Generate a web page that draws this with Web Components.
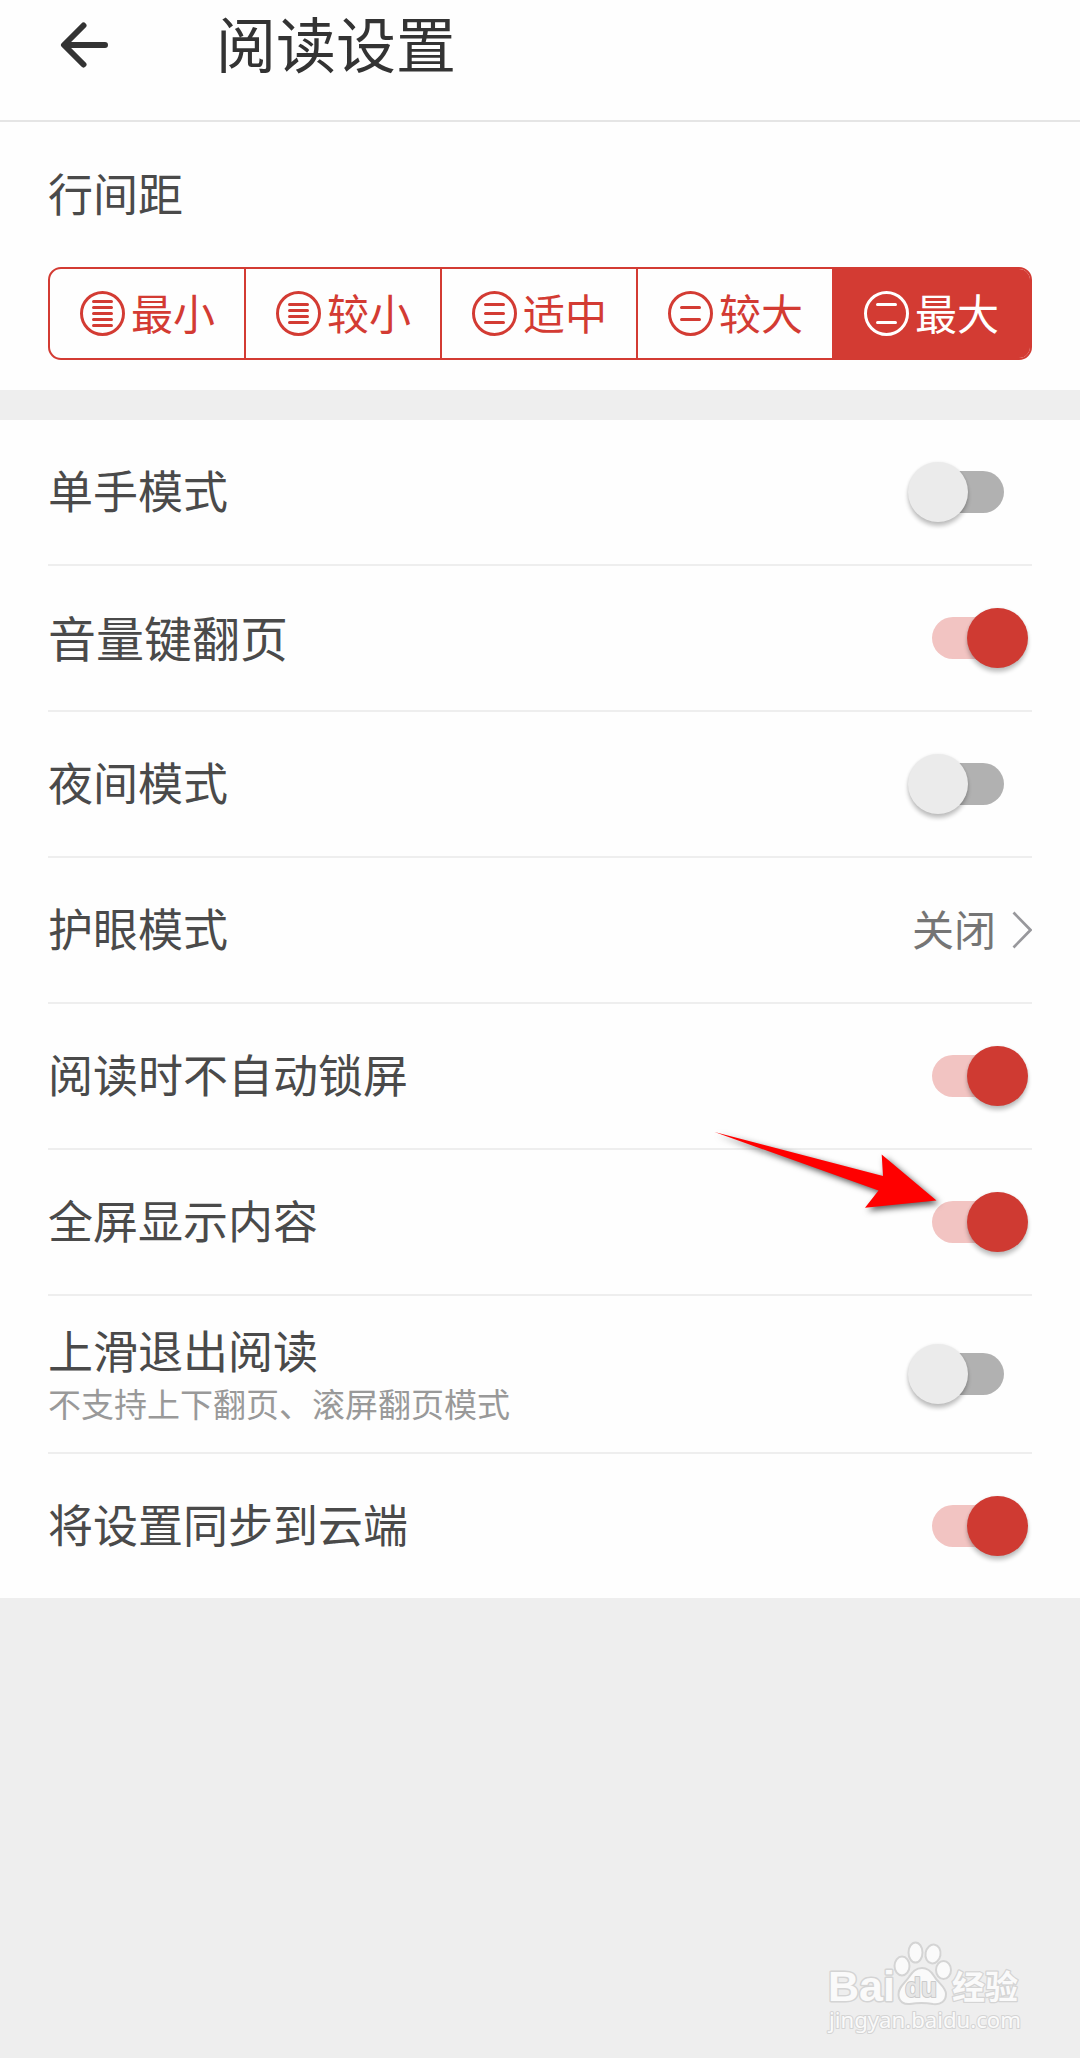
<!DOCTYPE html>
<html lang="zh-CN">
<head>
<meta charset="utf-8">
<title>阅读设置</title>
<style>
html, body { margin: 0; padding: 0; }
body { background: #eee; font-family: "Noto Sans CJK SC", sans-serif; color: #4a4a4a; }
</style>
</head>
<body>
<reader-settings></reader-settings>
<script>
const define = (name, html, setup) => {
  const tpl = document.createElement('template');
  tpl.innerHTML = html;
  customElements.define(name, class extends HTMLElement {
    constructor() {
      super();
      this.attachShadow({ mode: 'open' }).append(tpl.content.cloneNode(true));
    }
    connectedCallback() { if (setup) setup(this, this.shadowRoot); }
  });
};

define('page-header', `
<style>
:host { display: flex; align-items: center; box-sizing: border-box; height: 122px; padding: 0 0 32px 60px; border-bottom: 2px solid #e5e5e5; background: #fefefe; color: #333; }
svg { display: block; width: 50px; height: 50px; margin-right: 106px; margin-top: 2px; }
h1 { margin: 0; padding-bottom: 4px; font-size: 60px; line-height: 84px; font-weight: 400; }
</style>
<svg viewBox="0 0 50 50" fill="none" stroke="#333" stroke-width="6" stroke-linecap="round" stroke-linejoin="round"><path d="M23.5 5.5 4 25l19.500 19.500M5 25H45"/></svg>
<h1><slot></slot></h1>`);

define('spacing-icon', `
<style>:host { display: block; width: 45px; height: 45px; } svg { display: block; }</style>
<svg width="45" height="45" viewBox="0 0 45 45" fill="none" stroke="currentColor" stroke-width="3" stroke-linecap="round"><circle cx="22.5" cy="22.5" r="21"/><path/></svg>`,
(host, root) => {
  const ys = (host.getAttribute('lines') || '').split(' ').filter(Boolean);
  root.querySelector('path').setAttribute('d', ys.map(y => `M13.500 ${y}H31.500`).join(''));
});

define('segment-option', `
<style>
:host { display: flex; flex: none; align-items: center; box-sizing: border-box; width: 196px; height: 89px; padding-left: 30px; gap: 6px; border-right: 2px solid #d33b33; color: #d33b33; font-size: 42px; line-height: 60px; }
:host([selected]) { border-right: 0; background: #d33b33; color: #fff; }
:host([selected]) { margin-left: -2px; padding-left: 32px; width: 198px; }
span { padding-bottom: 4px; }
</style>
<span><slot></slot></span>`,
(host, root) => {
  const icon = document.createElement('spacing-icon');
  icon.setAttribute('lines', host.getAttribute('lines'));
  root.querySelector('span').before(icon);
});

define('segment-group', `
<style>:host { display: flex; box-sizing: border-box; height: 93px; border: 2px solid #d33b33; border-radius: 13px; overflow: hidden; }</style>
<slot></slot>`);

define('spacing-section', `
<style>
:host { display: flex; flex-direction: column; box-sizing: border-box; height: 268px; padding: 38px 48px 30px; background: #fefefe; }
h2 { margin: 0 0 41px; font-size: 45px; font-weight: 400; line-height: 66px; }
</style>
<h2><slot name="title"></slot></h2><slot></slot>`);

define('toggle-switch', `
<style>
:host { display: flex; align-items: center; position: relative; width: 120px; height: 60px; margin-right: 4px; }
.track { width: 92px; height: 42px; margin-left: 4px; border-radius: 21px; background: #b1b1b1; }
.thumb { position: absolute; left: 0; top: -.500px; width: 60px; height: 60px; border-radius: 50%; background: #ebebeb; box-shadow: 0 4px 4px rgba(0,0,0,.24), 0 0 3px rgba(0,0,0,.08); }
:host([on]) .track { margin-left: 24px; background: #f2c4c2; }
:host([on]) .thumb { left: 59px; width: 60.500px; background: #cf3a32; }
</style>
<div class="track"></div><div class="thumb"></div>`);

define('link-value', `
<style>
:host { display: flex; align-items: center; gap: 16px; font-size: 42px; line-height: 60px; color: #757575; }
span { padding-bottom: 4px; }
svg { display: block; }
</style>
<span><slot></slot></span><svg width="20" height="38" viewBox="0 0 20 38" fill="none" stroke="#98989c" stroke-width="2.700"><path d="M1.500 1.500 18.500 19 1.500 36.500"/></svg>`);

define('setting-row', `
<style>
:host { display: flex; align-items: center; justify-content: space-between; box-sizing: border-box; height: 146px; margin: 0 48px; border-bottom: 2px solid #eee; }
:host([last]) { height: 144px; border-bottom: 0; }
:host([tall]) { height: 158px; }
.text { padding-bottom: 4px; }
:host([tall]) .text { padding-bottom: 8px; }
.title { font-size: 45px; line-height: 66px; }
:host([large]) .title { font-size: 48px; line-height: 70px; }
:host([large]) .text { padding-bottom: 5px; }
.note { font-size: 33px; line-height: 40px; color: #999; }
</style>
<div class="text"><div class="title"><slot></slot></div><div class="note"><slot name="note"></slot></div></div><slot name="control"></slot>`);

define('pointer-arrow', `
<style>:host { position: absolute; left: 700px; top: 1120px; display: block; } svg { display: block; overflow: visible; filter: drop-shadow(3px 3px 3px rgba(0,0,0,.65)); }</style>
<svg width="250" height="100" viewBox="700 1120 250 100"><path fill="#f00" d="M714.500 1132 883 1176 881.700 1154.500 936.500 1200.500 865 1207.700 878.500 1190.500Z"/></svg>`);

define('page-watermark', `
<style>:host { position: absolute; left: 820px; top: 1930px; display: block; } svg { display: block; overflow: visible; }
text { paint-order: stroke; stroke-linejoin: round; }
</style>
<svg width="220" height="120" viewBox="820 1930 220 120" fill="#fafafa" stroke="#d4d4d4" stroke-width="2">
<text x="828" y="2001" font-family="Liberation Sans" font-weight="700" font-size="43" textLength="67" lengthAdjust="spacingAndGlyphs" stroke-width="3">Bai</text>
<ellipse cx="902" cy="1966" rx="7.500" ry="9.500"/>
<ellipse cx="915.500" cy="1952.500" rx="7" ry="10"/>
<ellipse cx="933" cy="1954" rx="7.500" ry="9.500" transform="rotate(10 933 1954)"/>
<ellipse cx="943.500" cy="1970" rx="7.500" ry="9"/>
<path d="M922 1968C915 1968 912 1973 909 1977 905 1983 898 1987 898.500 1995 899 2002 904 2004.500 910 2004 916 2003 927 2003 933 2004 941 2005 946 2001 946 1994 946 1987 938 1983 934 1976 931 1971 928 1968 922 1968Z"/>
<text x="905" y="1997" font-family="Liberation Sans" font-weight="700" font-size="27" textLength="32" lengthAdjust="spacingAndGlyphs" fill="#e6e6e6" stroke="#cbcbcb">du</text>
<text x="952" y="1999" font-family="Noto Sans CJK SC" font-weight="700" font-size="33" textLength="66" lengthAdjust="spacingAndGlyphs" stroke-width="2.500">经验</text>
<text x="829" y="2028" font-family="Noto Sans" font-size="21" textLength="192" lengthAdjust="spacingAndGlyphs">jingyan.baidu.com</text>
</svg>`);

define('reader-settings', `
<style>
:host { display: block; position: relative; width: 1080px; height: 2058px; overflow: hidden; background: #eee; }
main { display: flex; flex-direction: column; gap: 30px; }
.list { background: #fefefe; }
</style>
<page-header>阅读设置</page-header>
<main>
<spacing-section><span slot="title">行间距</span>
<segment-group>
<segment-option lines="10.5 16.5 22.5 28.5 34.5">最小</segment-option>
<segment-option lines="13.5 19.5 25.5 31.5">较小</segment-option>
<segment-option lines="13.5 22.5 31.5">适中</segment-option>
<segment-option lines="16.5 28.5">较大</segment-option>
<segment-option lines="13.5 31.5" selected>最大</segment-option>
</segment-group></spacing-section>
<div class="list">
<setting-row>单手模式<toggle-switch slot="control"></toggle-switch></setting-row>
<setting-row large>音量键翻页<toggle-switch slot="control" on></toggle-switch></setting-row>
<setting-row>夜间模式<toggle-switch slot="control"></toggle-switch></setting-row>
<setting-row>护眼模式<link-value slot="control">关闭</link-value></setting-row>
<setting-row>阅读时不自动锁屏<toggle-switch slot="control" on></toggle-switch></setting-row>
<setting-row>全屏显示内容<toggle-switch slot="control" on></toggle-switch></setting-row>
<setting-row tall>上滑退出阅读<span slot="note">不支持上下翻页、滚屏翻页模式</span><toggle-switch slot="control"></toggle-switch></setting-row>
<setting-row last>将设置同步到云端<toggle-switch slot="control" on></toggle-switch></setting-row>
</div>
</main>
<pointer-arrow></pointer-arrow>
<page-watermark></page-watermark>`);
</script>
</body>
</html>
